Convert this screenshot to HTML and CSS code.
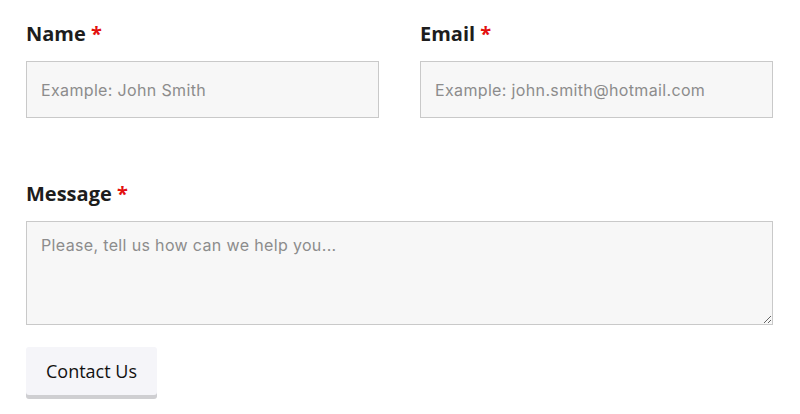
FILE: index.html
```html
<!DOCTYPE html>
<html lang="en">
<head>
  <meta charset="UTF-8" />
  <meta name="viewport" content="width=device-width, initial-scale=1.0" />
  <title>Contact</title>
  <link rel="stylesheet" href="styles.css">
</head>
<body>

<form class="contact-form">
  <div class="row">
    <div class="field">
      <label for="name">Name <span class="required">*</span></label>
      <input id="name" type="text" placeholder="Example: John Smith" />
    </div>
    <div class="field">
      <label for="email">Email <span class="required">*</span></label>
      <input id="email" type="email" placeholder="Example: john.smith@hotmail.com" />
    </div>
  </div>

  <div class="field message-field">
    <label for="message">Message <span class="required">*</span></label>
    <textarea id="message" placeholder="Please, tell us how can we help you..."></textarea>
  </div>

  <button type="submit" class="submit-button">Contact Us</button>
</form>

</body>
</html>
```

FILE: styles.css
```css
* {
  box-sizing: border-box;
}

body {
  font-family: 'Open Sans', sans-serif;
  margin: 0;
  padding: 0;
  background: white;
  color: #1d1d1d;
}

.contact-form {
  padding: 20px 27px 20px 26px;
}

.row {
  display: grid;
  grid-template-columns: 1fr 1fr;
  gap: 41px;
}

.field {
  display: flex;
  flex-direction: column;
}

.field label {
  font-size: 20px;
  font-weight: 700;
  line-height: 28px;
  margin-bottom: 13px;
}

.required {
  color: #e3100f;
}

.field input,
.field textarea {
  font-family: 'Inter', sans-serif;
  font-size: 16px;
  letter-spacing: 0.35px;
  color: #333;
  background: #f7f7f7;
  border: 1px solid #c9c9c9;
  border-radius: 0;
  padding: 0 14px;
  outline: none;
}

.field input {
  height: 57px;
}

.field textarea {
  height: 104px;
  padding-top: 11px;
  line-height: 24px;
  resize: vertical;
}

::placeholder {
  color: #8c8c8c;
}

.message-field {
  margin-top: 62px;
}

.submit-button {
  margin-top: 22px;
  font-family: inherit;
  font-size: 18px;
  color: #111;
  background: #f5f5f9;
  border: none;
  border-radius: 3px;
  padding: 0 20px;
  height: 48px;
  box-shadow: 0 4px 0 #cfcfd2;
  cursor: pointer;
}
```
